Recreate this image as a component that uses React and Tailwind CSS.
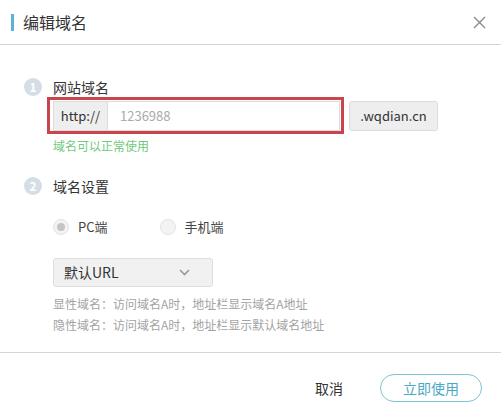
import React from 'react';

function Step({ n, label }) {
    return (
        <div className="flex items-center h-[18px]">
            <div className="w-[18px] h-[18px] rounded-full bg-[#d5dde6] text-white text-[12px] leading-[18px] text-center font-bold">{n}</div>
            <div className="ml-[11px] text-[14px] leading-[18px] text-[#333]">{label}</div>
        </div>
    );
}

function Radio({ label, checked }) {
    return (
        <div className="flex items-center">
            <div className="w-[16px] h-[16px] rounded-full border border-[#e2e2e2] bg-[#f3f3f3] flex items-center justify-center">
                {checked && <div className="w-[8px] h-[8px] rounded-full bg-[#c4c4c4]" />}
            </div>
            <span className="ml-[9px] text-[13px] leading-[16px] text-[#444]">{label}</span>
        </div>
    );
}

export default function App() {
    return (
        <div className="w-[501px] h-[415px] bg-white flex flex-col font-['Noto_Sans_CJK_SC',sans-serif] overflow-hidden">
            {/* Header */}
            <div className="h-[45px] flex items-center pl-[11px] pr-[15px] border-b border-[#d6d6d6] shrink-0">
                <div className="w-[3px] h-[17px] bg-[#5ab4cf]" />
                <div className="ml-[9px] text-[16px] leading-[20px] text-[#333]">编辑域名</div>
                <svg className="ml-auto" width="13" height="13" viewBox="0 0 13 13">
                    <path d="M1 1 L12 12 M12 1 L1 12" stroke="#8a8a8a" strokeWidth="1.4" fill="none" />
                </svg>
            </div>

            {/* Body */}
            <div className="h-[307px] shrink-0 pl-[24px] pt-[33px]">
                <Step n="1" label="网站域名" />
                <div className="ml-[29px] mt-[5px] flex items-center">
                    <div className="relative flex">
                        <div className="w-[55px] h-[30px] bg-[#eeeeee] border border-[#dcdcdc] flex items-center justify-center text-[13px] text-[#333]">http://</div>
                        <div className="w-[232px] h-[30px] border border-l-0 border-[#dcdcdc] flex items-center pl-[12px] text-[13px] text-[#aaa]">1236988</div>
                        <div className="absolute -left-[6px] -top-[4px] w-[297px] h-[37px] border-[3px] border-[#c8454b]" />
                    </div>
                    <div className="ml-[9px] w-[89px] h-[30px] bg-[#eeeeee] border border-[#dcdcdc] rounded-[3px] flex items-center justify-center text-[13px] text-[#333]">.wqdian.cn</div>
                </div>
                <div className="ml-[29px] mt-[7px] text-[12px] leading-[16px] text-[#72c97c]">域名可以正常使用</div>

                <div className="mt-[23px]">
                    <Step n="2" label="域名设置" />
                </div>
                <div className="ml-[29px] mt-[24px] flex items-center gap-[52px]">
                    <Radio label="PC端" checked />
                    <Radio label="手机端" />
                </div>
                <div className="ml-[29px] mt-[23px] w-[160px] h-[29px] bg-[#f1f1f1] border border-[#dedede] rounded-[3px] flex items-center pl-[10px] pr-[22px]">
                    <span className="text-[14px] text-[#333]">默认URL</span>
                    <svg className="ml-auto" width="11" height="7" viewBox="0 0 11 7">
                        <path d="M1 1 L5.5 5.5 L10 1" stroke="#999" strokeWidth="1.6" fill="none" />
                    </svg>
                </div>
                <div className="ml-[29px] mt-[6px] text-[12px] leading-[21px] text-[#a3a3a3]">
                    <div>显性域名：访问域名A时，地址栏显示域名A地址</div>
                    <div>隐性域名：访问域名A时，地址栏显示默认域名地址</div>
                </div>
            </div>

            {/* Footer */}
            <div className="flex-1 border-t border-[#d6d6d6] flex justify-end items-start pt-[21px] pr-[19px]">
                <div className="h-[28px] flex items-center text-[14px] text-[#333]">取消</div>
                <div className="ml-[37px] w-[102px] h-[28px] rounded-full border border-[#7fc3d3] flex items-center justify-center text-[14px] text-[#4aa9c4]">立即使用</div>
            </div>
        </div>
    );
}
